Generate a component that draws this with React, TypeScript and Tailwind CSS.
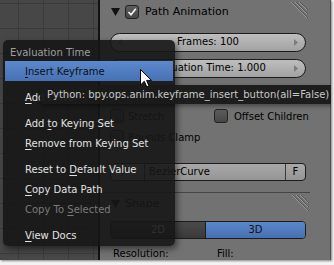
import React from "react";

function Tri() {
  return (
    <svg width="9" height="8" viewBox="0 0 9 8" className="shrink-0">
      <polygon points="0,0 9,0 4.5,8" fill="#111" />
    </svg>
  );
}

function Grip() {
  return (
    <svg width="18" height="17" viewBox="0 0 18 17" className="shrink-0">
      {[0, 4, 8].map((o) => (
        <g key={o}>
          <line x1={o + 1} y1="0" x2="17" y2={16 - o} stroke="#9a9a9a" strokeWidth="1" />
          <line x1={o + 2} y1="0" x2="18" y2={16 - o} stroke="#555" strokeWidth="1" />
        </g>
      ))}
    </svg>
  );
}

function Check({ checked }: { checked?: boolean }) {
  return (
    <span className="w-[14px] h-[14px] shrink-0 rounded-[3px] border border-[#222] bg-linear-to-b from-[#5c5c5c] to-[#474747] flex items-center justify-center">
      {checked && (
        <svg width="10" height="10" viewBox="0 0 10 10">
          <path d="M1.5 5 L4 7.8 L8.8 1.8" stroke="#f2f2f2" strokeWidth="1.7" fill="none" />
        </svg>
      )}
    </span>
  );
}

function Arrow({ right }: { right?: boolean }) {
  return (
    <svg width="4" height="7" viewBox="0 0 4 7" className="shrink-0">
      <polygon points={right ? "0,0 4,3.5 0,7" : "4,0 0,3.5 4,7"} fill="#7c7c7c" />
    </svg>
  );
}

function Slider({ label }: { label: string }) {
  return (
    <div className="h-[19px] rounded-full border border-[#1c1c1c] bg-linear-to-b from-[#bebebe] to-[#a2a2a2] flex items-center px-[7px] text-[10px] text-black">
      <Arrow />
      <span className="flex-1 text-center leading-none">{label}</span>
      <Arrow right />
    </div>
  );
}

function Opt({ label, checked, wide }: { label: string; checked?: boolean; wide?: boolean }) {
  return (
    <div className={`h-[21px] flex items-center whitespace-nowrap ${wide ? "w-[104px]" : ""}`}>
      <Check checked={checked} />
      <span className={`${wide ? "ml-[4px]" : "ml-[6px]"} text-[10px] text-black`}>{label}</span>
    </div>
  );
}

function Item({ children, dim }: { children: React.ReactNode; dim?: boolean }) {
  return (
    <div className={`h-5 flex items-center pl-[20px] ${dim ? "text-[#7a7a7a]" : "text-[#e2e2e2]"}`}>
      {children}
    </div>
  );
}

function Sep() {
  return <div className="h-[6px]" />;
}

export default function App() {
  return (
    <div className="w-[334px] h-[265px] bg-[#f3f3f3] font-['DejaVu_Sans',sans-serif] overflow-hidden">
      <div className="relative w-[331px] h-[260px] flex overflow-hidden shadow-[1px_1px_2px_rgba(0,0,0,0.45)]">
        {/* 3D view grid */}
        <div className="w-[98px] h-full bg-[#474747] bg-[linear-gradient(#3b3b3b_1px,transparent_1px),linear-gradient(90deg,#3b3b3b_1px,transparent_1px)] bg-[length:25px_25px] bg-[position:18px_3px]" />
        <div className="w-[2px] h-full bg-[#121212]" />

        {/* properties panel */}
        <div className="flex-1 min-w-0 h-full bg-[#727272] border-r border-[#4e4e4e] pl-[10px] pr-[24px] flex flex-col">
          <div className="h-[25px] flex items-center">
            <span className="ml-px"><Tri /></span>
            <span className="ml-[5px]"><Check checked /></span>
            <span className="ml-[6px] text-[11px] text-black">Path Animation</span>
            <span className="ml-auto -mr-[2px] self-start mt-[2px]"><Grip /></span>
          </div>
          <div className="mt-[9px]"><Slider label="Frames: 100" /></div>
          <div className="mt-[7px]"><Slider label="Evaluation Time: 1.000" /></div>

          <div className="mt-[7px] flex">
            <div className="flex flex-col shrink-0">
              <Opt label="Follow" wide />
              <Opt label="Stretch" wide />
              <Opt label="Bounds Clamp" wide />
            </div>
            <div className="flex flex-col">
              <Opt label="Radius" checked />
              <Opt label="Offset Children" />
            </div>
          </div>

          <div className="mt-[15px] h-[19px] flex rounded-[4px] border border-[#1c1c1c] bg-linear-to-b from-[#a8a8a8] to-[#959595] text-[10px] text-black overflow-hidden">
            <div className="w-[34px] flex items-center justify-center border-r border-[#3a3a3a]">
              <svg width="14" height="10" viewBox="0 0 14 10">
                <path d="M1 8 C4 0, 9 0, 13 6" stroke="#222" strokeWidth="1.3" fill="none" />
              </svg>
            </div>
            <div className="flex-1 flex items-center pl-[4px]">BezierCurve</div>
            <div className="w-[20px] flex items-center justify-center border-l border-[#3a3a3a]">F</div>
          </div>

          <div className="mt-[11px] h-px bg-[#454545] -ml-[6px] -mr-[4px]" />
          <div className="h-[24px] flex items-center">
            <span className="ml-px"><Tri /></span>
            <span className="ml-[5px] text-[11px] text-black">Shape</span>
            <span className="ml-auto -mr-[3px] self-start mt-[2px]"><Grip /></span>
          </div>

          <div className="mt-[5px] h-[19px] flex rounded-[4px] border border-[#1c1c1c] overflow-hidden text-[10px]">
            <div className="w-[95px] flex items-center justify-center bg-linear-to-b from-[#4a4a4a] to-[#3a3a3a] text-white border-r border-[#1c1c1c]">2D</div>
            <div className="flex-1 flex items-center justify-center bg-linear-to-b from-[#5b87c9] to-[#4670b2] text-[#111]">3D</div>
          </div>

          <div className="mt-[9px] flex text-[10px] text-black leading-[12px]">
            <span className="ml-[3px] w-[104px]">Resolution:</span>
            <span>Fill:</span>
          </div>
        </div>

        {/* context menu */}
        <div className="absolute left-[3px] top-[40px] w-[172px] h-[206px] rounded-[5px] bg-[rgba(22,22,22,0.9)] shadow-[2px_3px_6px_rgba(0,0,0,0.5)] pt-[4px] px-[2px] flex flex-col text-[10px]">
          <div className="h-[17px] flex items-center pl-[5px] text-[#9e9e9e]">Evaluation Time</div>
          <div className="h-5 flex items-center pl-[20px] bg-linear-to-b from-[#5c89cc] to-[#4672b5] text-[#0e0e0e]">
            <span><u className="underline-offset-2">I</u>nsert Keyframe</span>
          </div>
          <Sep />
          <Item><span><u className="underline-offset-2">A</u>dd Driver</span></Item>
          <Sep />
          <Item><span>Add <u className="underline-offset-2">t</u>o Keying Set</span></Item>
          <Item><span><u className="underline-offset-2">R</u>emove from Keying Set</span></Item>
          <Sep />
          <Item><span>Reset to <u className="underline-offset-2">D</u>efault Value</span></Item>
          <Item><span><u className="underline-offset-2">C</u>opy Data Path</span></Item>
          <Item dim><span>Copy To <u className="underline-offset-2">S</u>elected</span></Item>
          <Sep />
          <Item><span><u className="underline-offset-2">V</u>iew Docs</span></Item>
        </div>

        {/* tooltip */}
        <div className="absolute left-[40px] top-[85px] w-[300px] h-[19px] rounded-[4px] bg-[rgba(26,26,26,0.96)] shadow-[1px_2px_4px_rgba(0,0,0,0.4)] flex items-center pl-[7px] text-[10px] text-[#c8c8c8] whitespace-nowrap">
          Python: bpy.ops.anim.keyframe_insert_button(all=False)
        </div>

        {/* mouse cursor */}
        <svg className="absolute left-[140px] top-[69px]" width="12" height="19" viewBox="0 0 12 19">
          <path d="M0.5 0.5 L0.5 16 L4.3 12.3 L6.8 18 L9 17 L6.6 11.4 L11.5 11.4 Z" fill="#fff" stroke="#000" strokeWidth="1" strokeLinejoin="round" />
        </svg>
      </div>
    </div>
  );
}
